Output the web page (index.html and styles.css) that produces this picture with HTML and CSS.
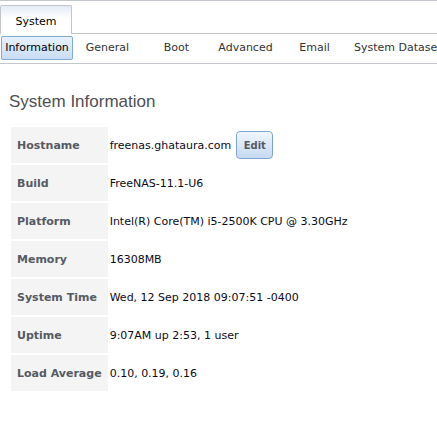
FILE: index.html
```html
<!DOCTYPE html>
<html>
<head>
<meta charset="utf-8">
<link rel="stylesheet" href="styles.css">
</head>
<body>
<div class="top-tabs">
  <div class="top-tab">System</div>
</div>
<div class="sub-tabs">
  <div class="sub-tab active info">Information</div>
  <div class="sub-tab">General</div>
  <div class="sub-tab">Boot</div>
  <div class="sub-tab">Advanced</div>
  <div class="sub-tab">Email</div>
  <div class="sub-tab wide">System Dataset</div>
</div>
<div class="content">
  <h1 class="title">System Information</h1>
  <table class="info-table">
    <tr><th>Hostname</th><td><span class="val">freenas.ghataura.com</span><button class="edit">Edit</button></td></tr>
    <tr><th>Build</th><td>FreeNAS-11.1-U6</td></tr>
    <tr><th>Platform</th><td>Intel(R) Core(TM) i5-2500K CPU @ 3.30GHz</td></tr>
    <tr><th>Memory</th><td>16308MB</td></tr>
    <tr><th>System Time</th><td>Wed, 12 Sep 2018 09:07:51 -0400</td></tr>
    <tr><th>Uptime</th><td>9:07AM up 2:53, 1 user</td></tr>
    <tr><th>Load Average</th><td>0.10, 0.19, 0.16</td></tr>
  </table>
</div>
</body>
</html>
```
FILE: styles.css
```css
html, body {
  margin: 0;
  padding: 0;
  background: #fff;
  font-family: "DejaVu Sans", Verdana, sans-serif;
  font-size: 11px;
  color: #000;
  overflow: hidden;
}
.top-tabs {
  border-top: 1px solid #c3c7cd;
  border-bottom: 1px solid #c3c7cd;
  height: 32px;
  display: flex;
  align-items: flex-end;
}
.top-tab {
  box-sizing: border-box;
  width: 72px;
  height: 29px;
  margin-bottom: -1px;
  border: 1px solid #c3c7cd;
  border-bottom: none;
  border-radius: 2px 2px 0 0;
  background: linear-gradient(#e4ecf6, #ffffff 45%);
  display: flex;
  align-items: center;
  justify-content: center;
  padding-top: 3px;
  color: #000;
}
.sub-tabs {
  display: flex;
  height: 29px;
  align-items: flex-start;
  border-bottom: 1px solid #c3c7cd;
  white-space: nowrap;
  overflow: hidden;
}
.sub-tab {
  box-sizing: border-box;
  width: 69px;
  flex: none;
  text-align: center;
  color: #333;
  margin-top: 2px;
  line-height: 23px;
}
.sub-tab.info {
  width: 72px;
  margin-left: 1px;
  height: 24px;
  line-height: 22px;
  border: 1px solid #82a9d1;
  border-radius: 2px;
  background: linear-gradient(#e8f1fc, #c9ddf5);
  color: #000;
}
.sub-tab.wide {
  width: auto;
  padding-left: 5px;
}
.content {
  padding: 0 9px;
}
.title {
  font-family: "Liberation Sans", Arial, sans-serif;
  font-weight: normal;
  font-size: 17px;
  color: #4d4f55;
  margin: 28px 0 13px 0;
}
.info-table {
  border-spacing: 2px;
  margin-left: 0;
}
.info-table th {
  width: 95px;
  box-sizing: border-box;
  height: 36px;
  background: #f4f4f4;
  text-align: left;
  padding: 0 6px;
  color: #555a63;
  font-weight: bold;
  white-space: nowrap;
}
.info-table td {
  padding: 0;
  white-space: nowrap;
  color: #0a0a1a;
}
.val {
  vertical-align: middle;
}
.edit {
  font-family: "DejaVu Sans", Verdana, sans-serif;
  font-size: 10px;
  font-weight: bold;
  color: #555a63;
  margin-left: 5px;
  width: 37px;
  height: 28px;
  border: 1px solid #7fa5cf;
  border-radius: 4px;
  background: linear-gradient(#f0f6fd, #c6daf2);
  vertical-align: middle;
  padding: 0;
}
```
